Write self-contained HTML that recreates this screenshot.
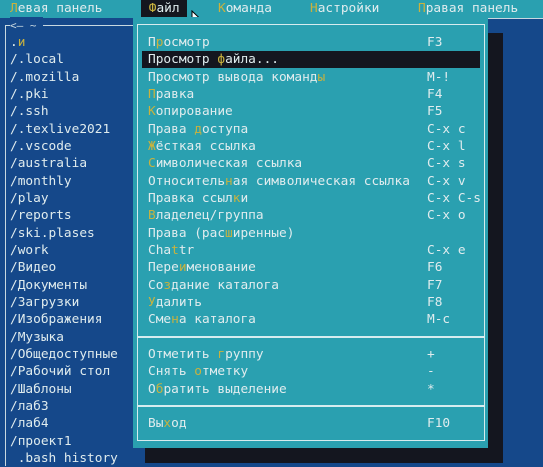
<!DOCTYPE html><html><head><meta charset="utf-8"><style>
body{margin:0;width:543px;height:463px;overflow:hidden;background:#15488a;font-family:"DejaVu Sans Mono","Liberation Mono",monospace;font-size:12.8px;color:#e0ecee;position:relative}
div{position:absolute;white-space:pre}
.top{left:0;top:0;width:543px;height:18px;background:#2aa0b0}
.h{color:#c9b23e}
.r{line-height:17.33px;height:17.33px}
</style></head><body>
<div class="top"></div>
<div class="r" style="left:10px;top:0;"><span class="h">Л</span>евая панель</div>
<div class="r" style="left:141px;top:0;width:46px;background:#14161f;">&nbsp;<span class="h">Ф</span>айл</div>
<div class="r" style="left:218px;top:0;"><span class="h">К</span>оманда</div>
<div class="r" style="left:310px;top:0;"><span class="h">Н</span>астройки</div>
<div class="r" style="left:418px;top:0;"><span class="h">П</span>равая панель</div>
<svg style="position:absolute;left:191px;top:10px" width="12" height="20"><path d="M1 1 L1 15 L4.5 11.5 L7 17 L9 16 L6.5 10.5 L11 10.5 Z" fill="#fff" stroke="#000" stroke-width="1"/></svg>
<!-- left panel -->
<div style="left:0;top:18px;width:145px;height:445px;background:#15488a"></div>
<div style="left:5px;top:25px;width:140px;height:440px;border-left:1.5px solid #c8d8e0;border-top:1.5px solid #c8d8e0"></div>
<div style="left:10px;top:17px;background:#15488a;color:#c8d8e0;line-height:17px;font-size:11px">&lt;— ~ </div>
<div style="left:10px;top:34px;line-height:17.33px">.<span style="color:#c9b23e">и</span>
/.local
/.mozilla
/.pki
/.ssh
/.texlive2021
/.vscode
/australia
/monthly
/play
/reports
/ski.plases
/work
/Видео
/Документы
/Загрузки
/Изображения
/Музыка
/Общедоступные
/Рабочий стол
/Шаблоны
/лаб3
/лаб4
/проект1
 .bash history</div>
<!-- right panel -->
<div style="left:487px;top:18px;width:56px;height:445px;background:#15488a;border-top:1.5px solid #c8d8e0"></div>
<!-- shadow -->
<div style="left:488px;top:33px;width:15px;height:430px;background:#14161f"></div>
<div style="left:145px;top:448px;width:358px;height:15px;background:#14161f"></div>
<!-- menu -->
<div style="left:133px;top:17px;width:355px;height:431px;background:#2aa0b0"></div>
<div style="left:137px;top:24px;width:346px;height:415px;border:1.5px solid #d6ecef"></div>
<div style="left:137px;top:336px;width:348px;height:1.5px;background:#d6ecef"></div>
<div style="left:137px;top:405px;width:348px;height:1.5px;background:#d6ecef"></div>
<div style="left:142px;top:51px;width:338px;height:17px;background:#14161f"></div>
<div style="left:148px;top:34px;line-height:17.33px">П<span class="h">р</span>осмотр
Просмотр <span class="h">ф</span>айла...
Просмотр вывода команд<span class="h">ы</span>
<span class="h">П</span>равка
<span class="h">К</span>опирование
Права <span class="h">д</span>оступа
<span class="h">Ж</span>ёсткая ссылка
<span class="h">С</span>имволическая ссылка
Относитель<span class="h">н</span>ая символическая ссылка
Правка ссыл<span class="h">к</span>и
<span class="h">В</span>ладелец/группа
Права (рас<span class="h">ш</span>иренные)
Cha<span class="h">t</span>tr
Пере<span class="h">и</span>менование
Со<span class="h">з</span>дание каталога
<span class="h">У</span>далить
Сме<span class="h">н</span>а каталога

Отметить <span class="h">г</span>руппу
Снять <span class="h">о</span>тметку
О<span class="h">б</span>ратить выделение

Вы<span class="h">х</span>од</div>
<div style="left:427px;top:34px;line-height:17.33px">F3

M-!
F4
F5
C-x c
C-x l
C-x s
C-x v
C-x C-s
C-x o

C-x e
F6
F7
F8
M-c

+
-
*

F10</div>
</body></html>
